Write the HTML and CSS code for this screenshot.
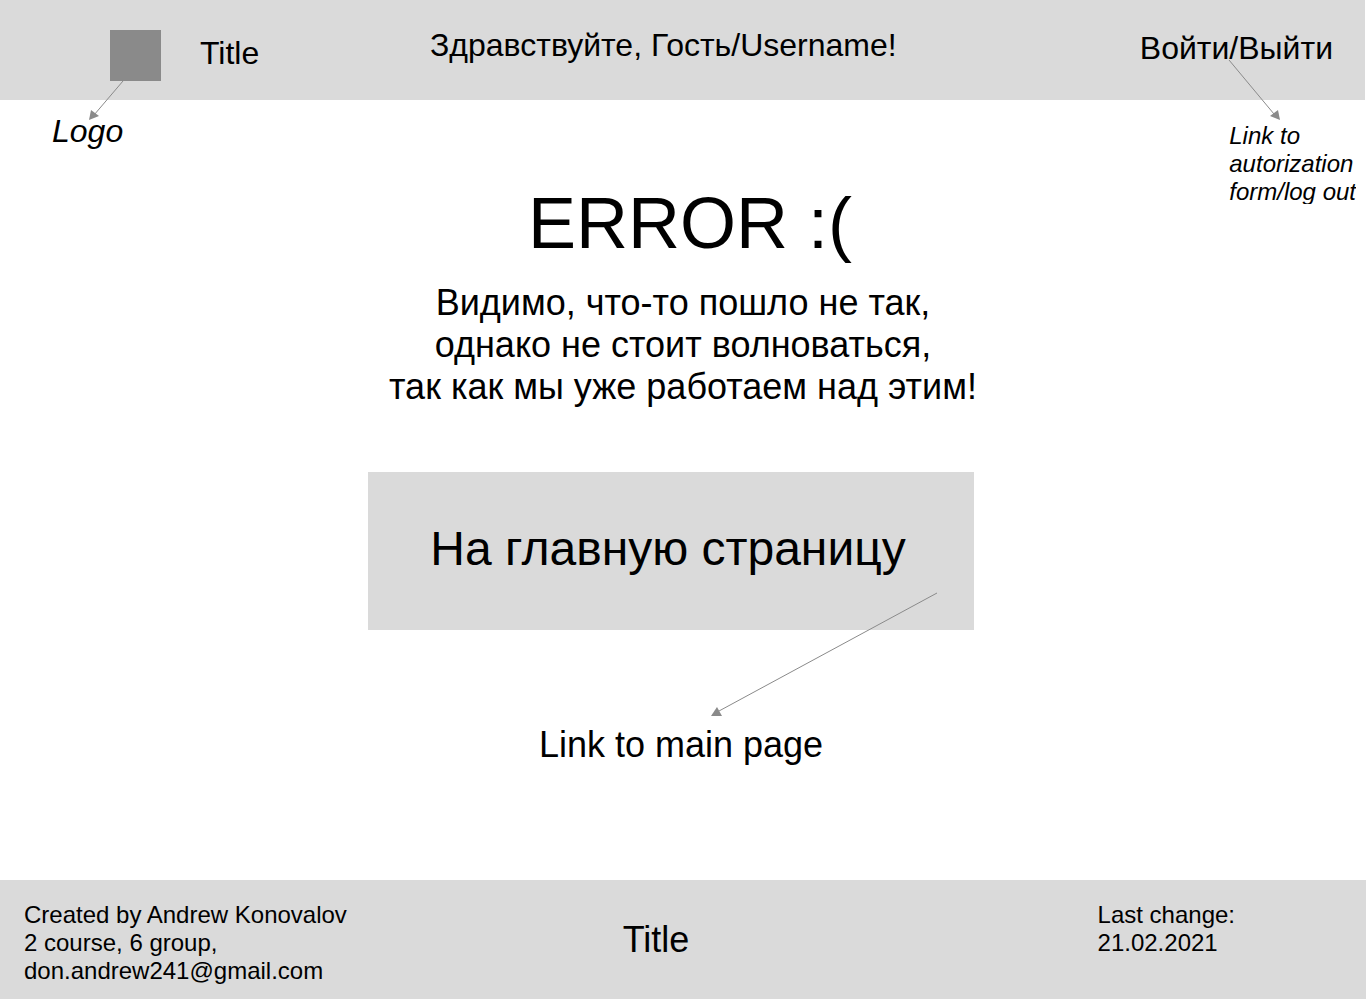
FILE: index.html
```html
<!DOCTYPE html>
<html lang="ru">
<head>
<meta charset="utf-8">
<meta name="viewport" content="width=device-width, initial-scale=1">
<title>Title</title>
<link rel="stylesheet" href="styles.css">
</head>
<body>
<header class="header">
  <div class="brand">
    <div class="logo">
      <svg class="arrow arrow-logo" width="40" height="44" viewBox="0 0 40 44" aria-hidden="true">
        <path class="arrow-line" d="M34 4 L5 38"/>
        <path class="arrow-head" d="M0 43 L2 33 L10 39 Z"/>
      </svg>
    </div>
    <span class="brand-title">Title</span>
  </div>
  <p class="greeting">Здравствуйте, Гость/Username!</p>
  <a class="auth" href="#">Войти/Выйти
    <svg class="arrow arrow-auth" width="52" height="62" viewBox="0 0 52 62" aria-hidden="true">
      <path class="arrow-line" d="M0 0 L45 54"/>
      <path class="arrow-head" d="M51 60 L41 56 L49 50 Z"/>
    </svg>
  </a>
</header>
<main class="main">
  <p class="note note-logo">Logo</p>
  <section class="content">
    <h1 class="error">ERROR :(</h1>
    <p class="message">Видимо, что-то пошло не так,<br>однако не стоит волноваться,<br>так как мы уже работаем над этим!</p>
    <a class="home" href="#">На главную страницу
      <svg class="arrow arrow-home" width="228" height="124" viewBox="0 0 228 124" aria-hidden="true">
        <path class="arrow-line" d="M226 1 L8 119"/>
        <path class="arrow-head" d="M0 124 L6 115 L11 124 Z"/>
      </svg>
    </a>
    <p class="note-home">Link to main page</p>
  </section>
  <p class="note note-auth">Link to<br>autorization<br>form/log out</p>
</main>
<footer class="footer">
  <p class="author">Created by Andrew Konovalov<br>2 course, 6 group,<br>don.andrew241@gmail.com</p>
  <p class="footer-title">Title</p>
  <p class="changed">Last change:<br>21.02.2021</p>
</footer>
</body>
</html>
```
FILE: styles.css
```css
* {
  box-sizing: border-box;
}

body {
  margin: 0;
  min-height: 100vh;
  display: flex;
  flex-direction: column;
  background: #fff;
  color: #000;
  font-family: "Liberation Sans", Arial, sans-serif;
  font-size: 32px;
  line-height: 36px;
}

p,
h1 {
  margin: 0;
  font-weight: 400;
}

a {
  color: inherit;
  text-decoration: none;
}

.header {
  display: grid;
  grid-template-columns: 430px 1fr auto;
  align-items: start;
  min-height: 100px;
  margin-right: 1px;
  padding-right: 32px;
  background: #dadada;
}

.brand {
  display: flex;
  gap: 39px;
  padding: 30px 0 0 110px;
}

.logo {
  position: relative;
  width: 51px;
  height: 51px;
  background: #8a8a8a;
}

.brand-title {
  padding-top: 5px;
}

.greeting {
  padding-top: 27px;
}

.auth {
  position: relative;
  margin-top: 30px;
}

/* Annotation arrows drawn over the layout */
.arrow {
  position: absolute;
  overflow: visible;
}

.arrow-line {
  fill: none;
  stroke: #8a8a8a;
  stroke-width: 1;
}

.arrow-head {
  fill: #8a8a8a;
}

.arrow-logo {
  left: -21px;
  top: 47px;
}

.arrow-auth {
  left: 89px;
  top: 30px;
}

.arrow-home {
  right: 35px;
  top: 120px;
}

.main {
  flex: 1;
  display: grid;
  grid-template-columns: 1fr 630px 1fr;
  align-items: start;
}

.note {
  font-style: italic;
}

.note-logo {
  padding: 13px 0 0 52px;
}

.note-auth {
  justify-self: end;
  height: 82px;
  margin: 22px 10px 0 0;
  overflow: hidden;
  font-size: 24px;
  line-height: 28px;
}

.content {
  display: flex;
  flex-direction: column;
  padding-top: 81px;
  font-size: 36px;
  line-height: 42px;
  text-align: center;
}

.error {
  padding-left: 14px;
  font-size: 72px;
  line-height: 84px;
}

.message {
  margin-top: 17px;
}

.home {
  position: relative;
  width: 606px;
  margin-top: 64px;
  padding: 49px 6px 53px 0;
  background: #dadada;
  font-size: 48px;
  line-height: 56px;
}

.note-home {
  margin-top: 94px;
  padding-right: 4px;
}

.footer {
  display: grid;
  grid-template-columns: 1fr auto 1fr;
  min-height: 119px;
  margin-bottom: 1px;
  padding: 21px 78px 14px 24px;
  background: #dadada;
  font-size: 24px;
  line-height: 28px;
}

.footer-title {
  padding-top: 18px;
  font-size: 36px;
  line-height: 42px;
}

.changed {
  justify-self: end;
  padding-right: 53px;
}
```
